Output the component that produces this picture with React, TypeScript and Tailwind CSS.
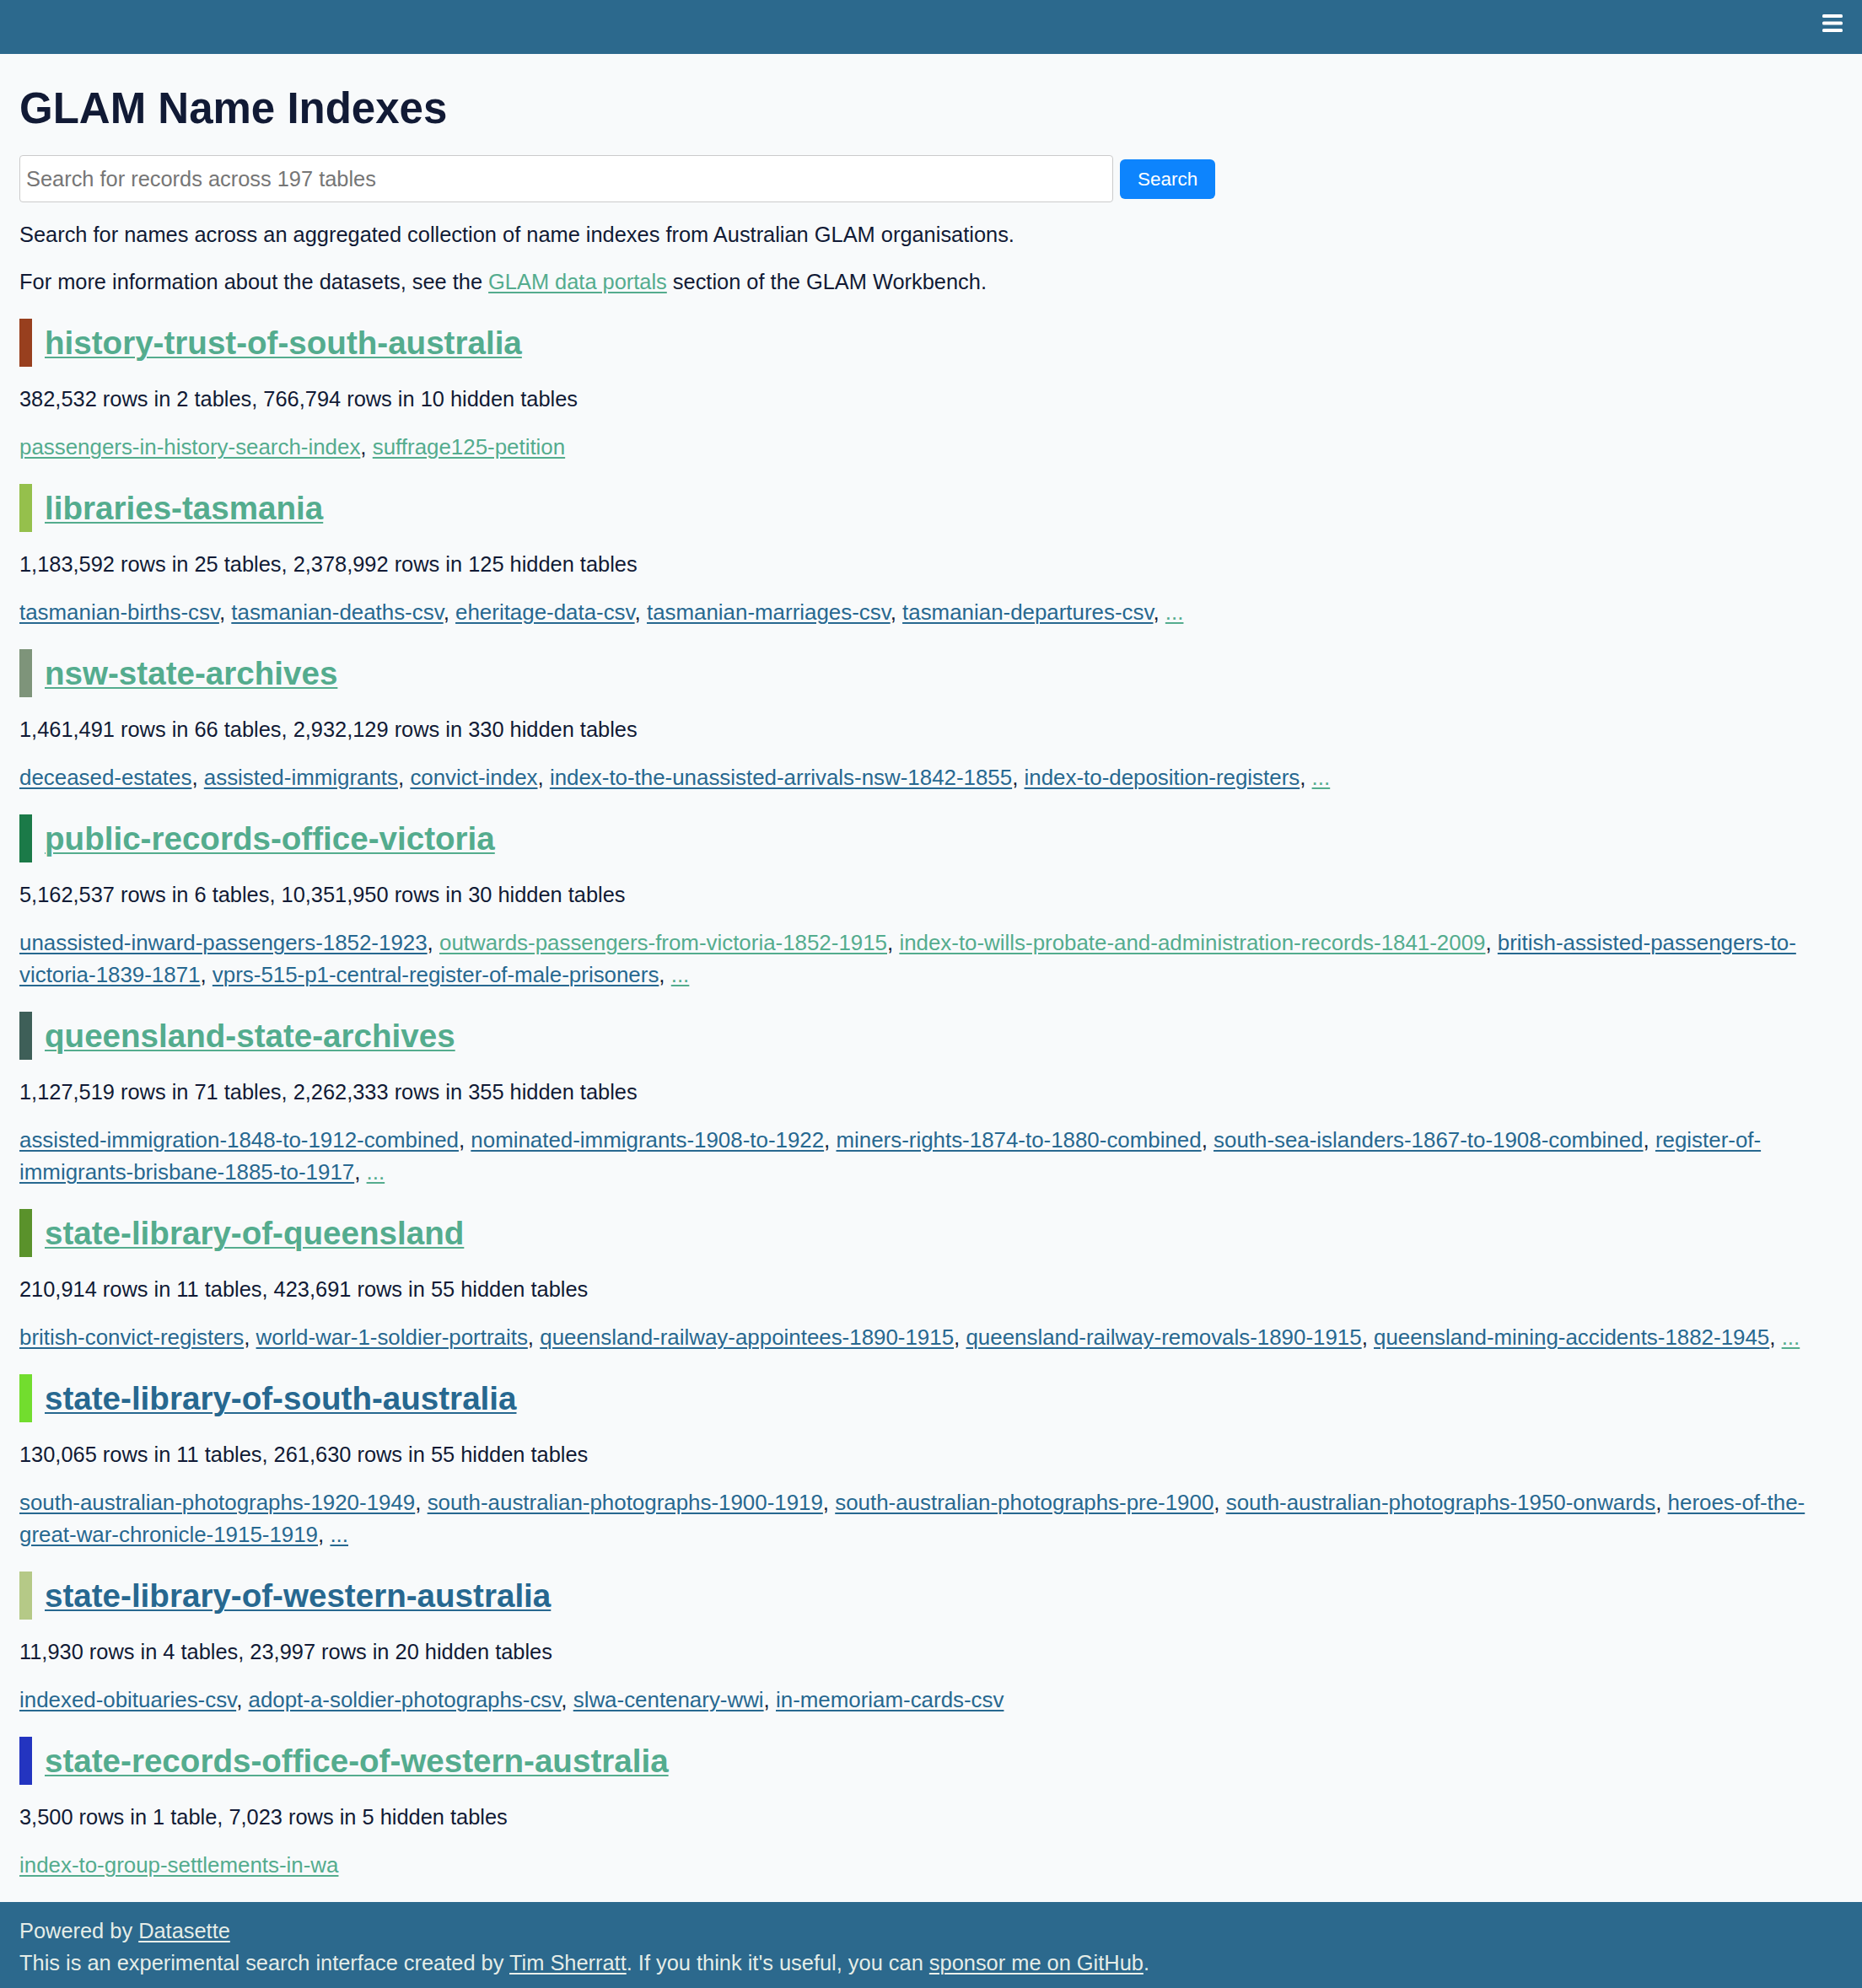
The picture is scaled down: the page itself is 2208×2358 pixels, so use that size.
import React from 'react';

type Table = { name: string; visited?: boolean };
type Db = {
  name: string;
  bar: string;
  visited: boolean;
  stats: string;
  tables: Table[];
  more?: 'visited' | 'link';
};

const LINK = 'text-[#276890] underline decoration-[1.5px] underline-offset-[3px]';
const VISITED = 'text-[#54ac8e] underline decoration-[1.5px] underline-offset-[3px]';

const dbs: Db[] = [
  {
    name: 'history-trust-of-south-australia',
    bar: 'border-[#983f1e]',
    visited: true,
    stats: '382,532 rows in 2 tables, 766,794 rows in 10 hidden tables',
    tables: [
      { name: 'passengers-in-history-search-index', visited: true },
      { name: 'suffrage125-petition', visited: true },
    ],
  },
  {
    name: 'libraries-tasmania',
    bar: 'border-[#95c04c]',
    visited: true,
    stats: '1,183,592 rows in 25 tables, 2,378,992 rows in 125 hidden tables',
    tables: [
      { name: 'tasmanian-births-csv' },
      { name: 'tasmanian-deaths-csv' },
      { name: 'eheritage-data-csv' },
      { name: 'tasmanian-marriages-csv' },
      { name: 'tasmanian-departures-csv' },
    ],
    more: 'visited',
  },
  {
    name: 'nsw-state-archives',
    bar: 'border-[#7e947a]',
    visited: true,
    stats: '1,461,491 rows in 66 tables, 2,932,129 rows in 330 hidden tables',
    tables: [
      { name: 'deceased-estates' },
      { name: 'assisted-immigrants' },
      { name: 'convict-index' },
      { name: 'index-to-the-unassisted-arrivals-nsw-1842-1855' },
      { name: 'index-to-deposition-registers' },
    ],
    more: 'visited',
  },
  {
    name: 'public-records-office-victoria',
    bar: 'border-[#1b7a48]',
    visited: true,
    stats: '5,162,537 rows in 6 tables, 10,351,950 rows in 30 hidden tables',
    tables: [
      { name: 'unassisted-inward-passengers-1852-1923' },
      { name: 'outwards-passengers-from-victoria-1852-1915', visited: true },
      { name: 'index-to-wills-probate-and-administration-records-1841-2009', visited: true },
      { name: 'british-assisted-passengers-to-victoria-1839-1871' },
      { name: 'vprs-515-p1-central-register-of-male-prisoners' },
    ],
    more: 'visited',
  },
  {
    name: 'queensland-state-archives',
    bar: 'border-[#3e5f58]',
    visited: true,
    stats: '1,127,519 rows in 71 tables, 2,262,333 rows in 355 hidden tables',
    tables: [
      { name: 'assisted-immigration-1848-to-1912-combined' },
      { name: 'nominated-immigrants-1908-to-1922' },
      { name: 'miners-rights-1874-to-1880-combined' },
      { name: 'south-sea-islanders-1867-to-1908-combined' },
      { name: 'register-of-immigrants-brisbane-1885-to-1917' },
    ],
    more: 'visited',
  },
  {
    name: 'state-library-of-queensland',
    bar: 'border-[#5a922b]',
    visited: true,
    stats: '210,914 rows in 11 tables, 423,691 rows in 55 hidden tables',
    tables: [
      { name: 'british-convict-registers' },
      { name: 'world-war-1-soldier-portraits' },
      { name: 'queensland-railway-appointees-1890-1915' },
      { name: 'queensland-railway-removals-1890-1915' },
      { name: 'queensland-mining-accidents-1882-1945' },
    ],
    more: 'visited',
  },
  {
    name: 'state-library-of-south-australia',
    bar: 'border-[#72dd2e]',
    visited: false,
    stats: '130,065 rows in 11 tables, 261,630 rows in 55 hidden tables',
    tables: [
      { name: 'south-australian-photographs-1920-1949' },
      { name: 'south-australian-photographs-1900-1919' },
      { name: 'south-australian-photographs-pre-1900' },
      { name: 'south-australian-photographs-1950-onwards' },
      { name: 'heroes-of-the-great-war-chronicle-1915-1919' },
    ],
    more: 'link',
  },
  {
    name: 'state-library-of-western-australia',
    bar: 'border-[#b5c987]',
    visited: false,
    stats: '11,930 rows in 4 tables, 23,997 rows in 20 hidden tables',
    tables: [
      { name: 'indexed-obituaries-csv' },
      { name: 'adopt-a-soldier-photographs-csv' },
      { name: 'slwa-centenary-wwi' },
      { name: 'in-memoriam-cards-csv' },
    ],
  },
  {
    name: 'state-records-office-of-western-australia',
    bar: 'border-[#2334c0]',
    visited: true,
    stats: '3,500 rows in 1 table, 7,023 rows in 5 hidden tables',
    tables: [{ name: 'index-to-group-settlements-in-wa', visited: true }],
  },
];

const Hamburger = () => (
  <svg width="24" height="22" viewBox="0 0 24 22" fill="#ffffff">
    <rect x="0" y="0" width="24" height="4" rx="1.5" />
    <rect x="0" y="8.5" width="24" height="4" rx="1.5" />
    <rect x="0" y="17" width="24" height="4" rx="1.5" />
  </svg>
);

const Database = ({ db }: { db: Db }) => (
  <section className="mt-[25px]">
    <h2 className={`border-l-[15px] ${db.bar} pl-[15px] text-[38.6px] leading-[57px] font-bold`}>
      <a href="#" className={db.visited ? VISITED : LINK}>
        {db.name}
      </a>
    </h2>
    <p className="mt-[19px]">{db.stats}</p>
    <p className="mt-[19px] text-[25.9px]">
      {db.tables.map((t, i) => (
        <React.Fragment key={t.name}>
          <a href="#" className={t.visited ? VISITED : LINK}>
            {t.name}
          </a>
          {i < db.tables.length - 1 || db.more ? ', ' : ''}
        </React.Fragment>
      ))}
      {db.more && (
        <a href="#" className={db.more === 'visited' ? VISITED : LINK}>
          ...
        </a>
      )}
    </p>
  </section>
);

export default function App() {
  return (
    <div className="min-h-screen flex flex-col bg-[#f8fafb] text-[#111a35] font-['Liberation_Sans',Arial,sans-serif] text-[25.4px] leading-[38px]">
      {/* Top bar */}
      <header className="h-[64px] bg-[#2c698d] flex justify-end items-start pt-[17px] pr-[23px]">
        <Hamburger />
      </header>

      <main className="flex-1 px-[23px] pt-[35px] pb-[25px]">
        <h1 className="text-[51px] leading-[60px] font-bold">GLAM Name Indexes</h1>

        <form className="mt-[25px] flex items-center gap-[8px]" onSubmit={(e) => e.preventDefault()}>
          <input
            type="search"
            placeholder="Search for records across 197 tables"
            className="w-[1297px] h-[56px] bg-white border border-[#cbcbcb] rounded-[4px] px-[7px] text-[25.4px] placeholder:text-[#767676] outline-none"
          />
          <button
            type="submit"
            className="h-[47px] px-[21px] bg-[#0d84fd] text-white text-[22.5px] leading-[47px] rounded-[6px]"
          >
            Search
          </button>
        </form>

        <p className="mt-[19px]">
          Search for names across an aggregated collection of name indexes from Australian GLAM organisations.
        </p>
        <p className="mt-[18px]">
          For more information about the datasets, see the{' '}
          <a href="#" className={VISITED}>
            GLAM data portals
          </a>{' '}
          section of the GLAM Workbench.
        </p>

        <div className="mt-[1px]">
          {dbs.map((db) => (
            <Database key={db.name} db={db} />
          ))}
        </div>
      </main>

      <footer className="bg-[#2c698d] text-[#fffff4]/90 px-[23px] pt-[15px] pb-[12px]">
        <div>
          Powered by{' '}
          <a href="#" className="underline decoration-[1.5px] underline-offset-[3px]">
            Datasette
          </a>
        </div>
        <div>
          This is an experimental search interface created by{' '}
          <a href="#" className="underline decoration-[1.5px] underline-offset-[3px]">
            Tim Sherratt
          </a>
          . If you think it's useful, you can{' '}
          <a href="#" className="underline decoration-[1.5px] underline-offset-[3px]">
            sponsor me on GitHub
          </a>
          .
        </div>
      </footer>
    </div>
  );
}
